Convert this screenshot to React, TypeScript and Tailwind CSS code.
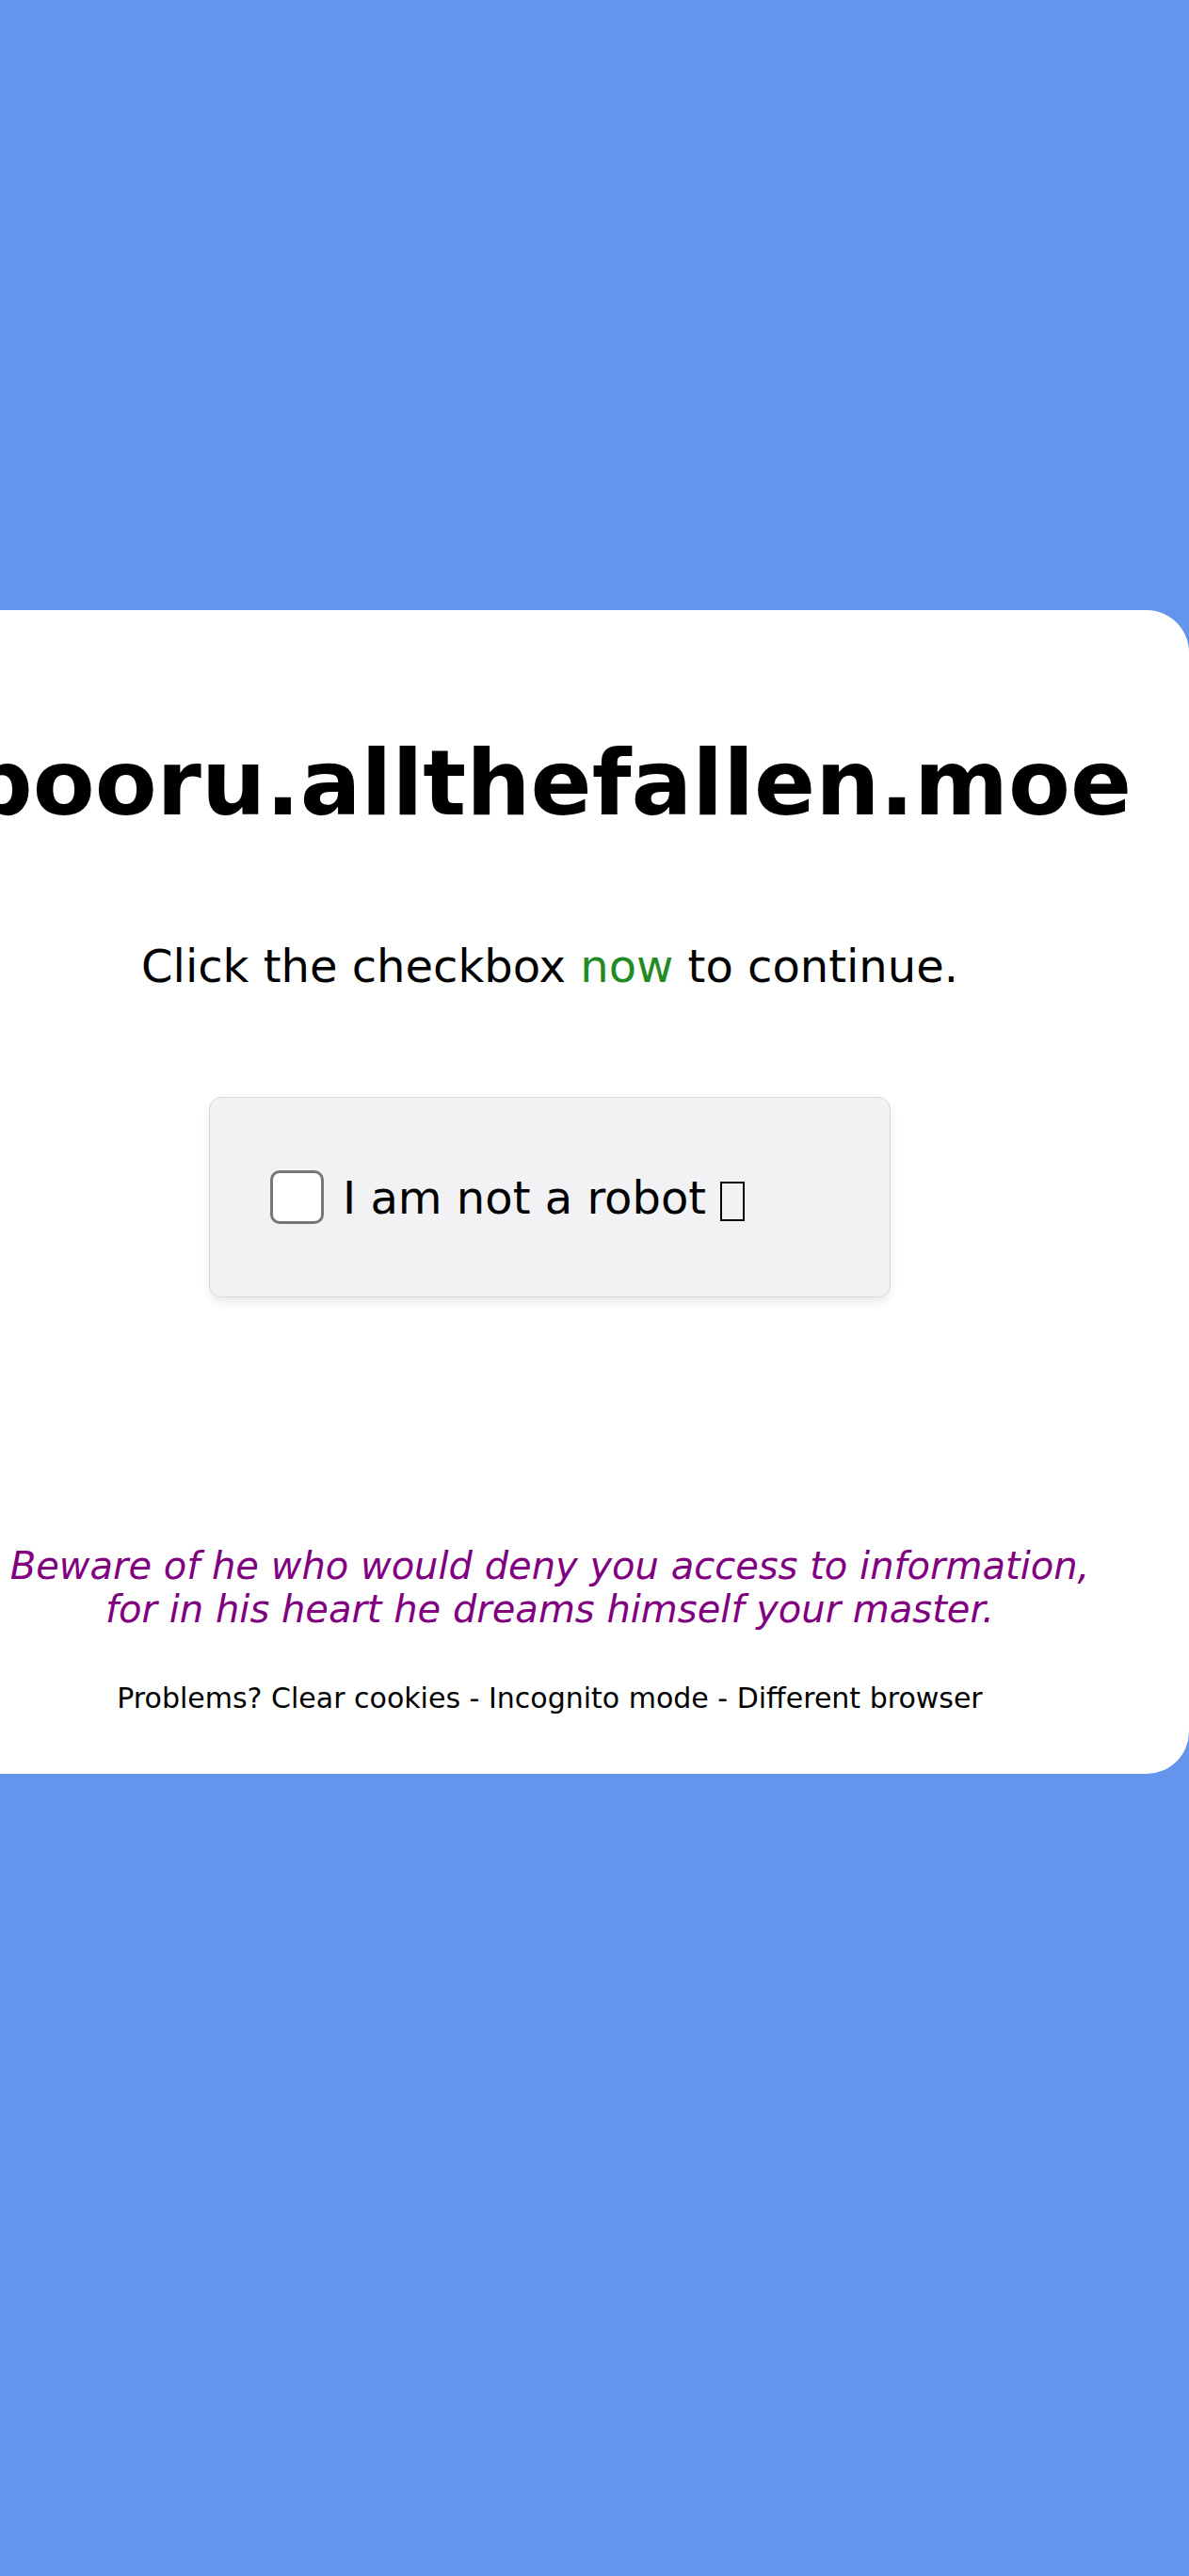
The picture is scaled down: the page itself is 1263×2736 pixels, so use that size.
import React from 'react';

export default function App() {
  return (
    <div className="min-h-[2736px] w-full overflow-hidden bg-[#6495ed] pt-[648px] font-['DejaVu_Sans',sans-serif]">
      {/* card wider than the viewport, centred at x=584 */}
      <div className="ml-[-95px] flex h-[1236px] w-[1358px] flex-col items-center rounded-[45px] bg-white pt-[128px] text-black">
        <h1 className="whitespace-nowrap text-[96px] font-bold leading-[normal]">
          booru.allthefallen.moe
        </h1>

        <p className="mt-[110px] text-[48px] leading-[normal]">
          Click the checkbox <span className="text-[#228b22]">now</span> to continue.
        </p>

        <div className="mt-[111px] flex h-[213px] w-[724px] items-center rounded-[13px] border border-[#d8d8d8] bg-[#f2f2f5] pl-[64px] shadow-[0_6px_10px_rgba(0,0,0,0.08)]">
          <span className="h-[57px] w-[57px] shrink-0 rounded-[10px] border-[3px] border-[#767676] bg-white" />
          <span className="ml-[20px] text-[48px] leading-[normal]">
            I am not a robot{' '}
            {/* emoji renders as a missing-glyph box in the reference */}
            <span
              aria-label="robot"
              className="inline-block h-[42px] w-[26px] border-2 border-black align-[-8px]"
            />
          </span>
        </div>

        <p className="mt-[262px] text-center text-[40px] italic leading-[normal] text-[#800080]">
          Beware of he who would deny you access to information,
          <br />
          for in his heart he dreams himself your master.
        </p>

        <p className="mt-[54px] text-[30px] leading-[normal]">
          Problems? Clear cookies - Incognito mode - Different browser
        </p>
      </div>
    </div>
  );
}
